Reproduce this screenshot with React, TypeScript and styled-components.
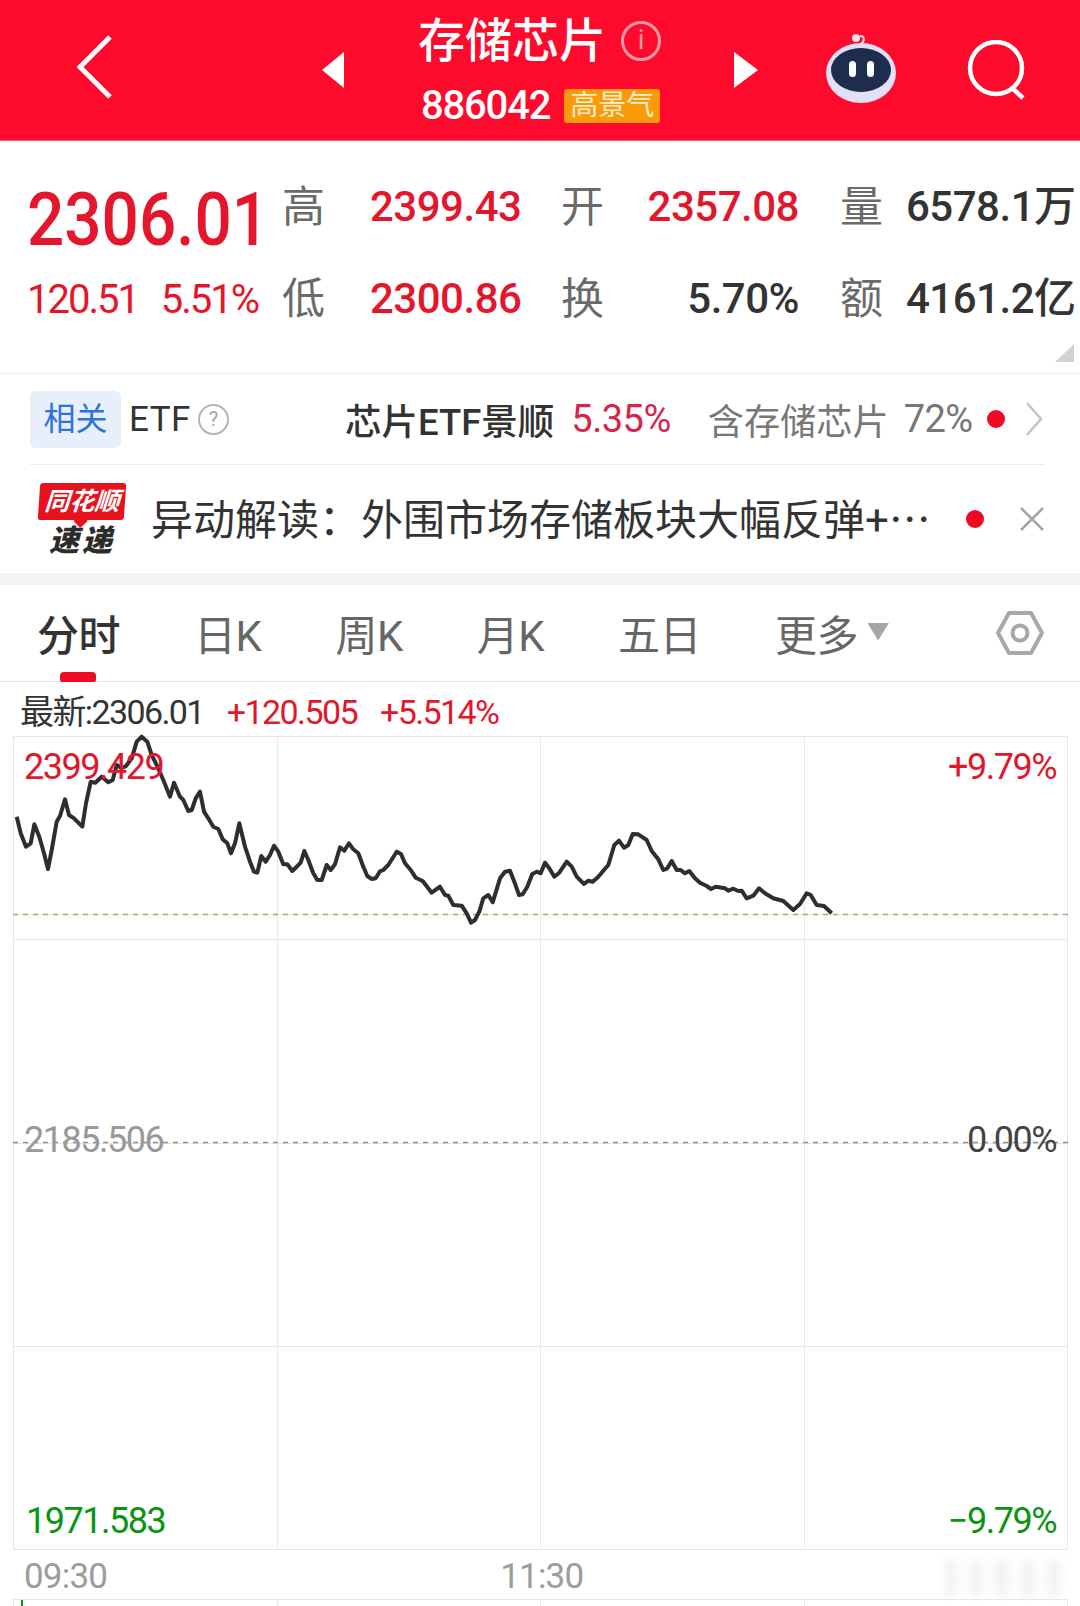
import styled, { createGlobalStyle } from "styled-components";

const FONT = `Roboto, "Noto Sans CJK SC", sans-serif`;
const RED = "#e4162c";

const GlobalStyle = createGlobalStyle`
	html, body {
		margin: 0;
		padding: 0;
		background: #fff;
	}
	* {
		box-sizing: border-box;
	}
`;

// points read off the reference, in px relative to the chart's top-left corner
const LINE_A = [
	[50, 260], [62, 310], [78, 350], [92, 340], [103, 283], [118, 320], [132, 370], [144, 417], [155, 360], [170, 275],
	[180, 258], [195, 208], [207, 255], [222, 265], [247, 290], [258, 220], [272, 155], [286, 158], [305, 140], [325, 157],
	[338, 150], [350, 105], [365, 115], [378, 108], [395, 85], [410, 35], [425, 20], [442, 35], [455, 75], [470, 105],
	[490, 150], [510, 200], [522, 158], [540, 200], [550, 210], [565, 243], [575, 240], [587, 205], [600, 185], [612, 245],
	[625, 265], [640, 290], [655, 297], [668, 328], [682, 340], [693, 370], [705, 340], [718, 280], [735, 350], [750, 395],
	[762, 425], [772, 428], [784, 378], [797, 395], [810, 375], [822, 347], [835, 365], [850, 403], [862, 403], [877, 423],
	[890, 410], [902, 398], [913, 363], [925, 390], [940, 430], [952, 450], [965, 450], [980, 405], [992, 420], [1005, 403],
	[1020, 352], [1033, 362], [1047, 340], [1060, 358], [1075, 370], [1090, 410], [1102, 438], [1115, 447], [1127, 445],
	[1140, 424], [1150, 420], [1165, 405], [1190, 365], [1203, 372], [1215, 400], [1232, 420], [1247, 443], [1268, 453],
];
const LINE_B = [
	[35, 278], [60, 260], [75, 285], [85, 287], [100, 315], [125, 317], [140, 340], [153, 368], [165, 360], [178, 335],
	[190, 295], [205, 285], [218, 307], [240, 235], [255, 215], [270, 212], [283, 245], [297, 285], [308, 283], [322, 260],
	[337, 222], [350, 215], [362, 220], [375, 188], [388, 205], [403, 230], [418, 218], [440, 185], [455, 200], [470, 230],
	[492, 252], [505, 242], [518, 245], [535, 230], [550, 212], [565, 195], [583, 135], [597, 122], [612, 143], [625, 135],
	[638, 102], [655, 103], [680, 120], [695, 153], [715, 178], [730, 210], [742, 205], [755, 183], [770, 210], [782, 210],
	[795, 220], [808, 213], [825, 235], [840, 248], [860, 258], [873, 267], [887, 260], [915, 265], [925, 272], [940, 266],
	[955, 273], [965, 272], [980, 295], [1000, 287], [1017, 265], [1035, 280], [1060, 295], [1090, 303], [1120, 330],
	[1140, 312], [1160, 280], [1172, 285], [1190, 315], [1212, 318], [1235, 340],
];
const PRICE_LINE = [
	...LINE_A.map(([x, y]) => [x / 3 - 13, y / 3 - 6]),
	...LINE_B.map(([x, y]) => [420 + x / 3 - 13, 64 + y / 3]),
]
	.map(([x, y]) => `${x.toFixed(1)},${y.toFixed(1)}`)
	.join(" ");

const App = () => {
	return (
		<Page>
			<GlobalStyle />
			<Header>
				<BackIcon width="36" height="64" viewBox="0 0 36 64">
					<path d="M33 2 L3 32 L33 62" fill="none" stroke="#fff" strokeWidth="5" />
				</BackIcon>
				<svg width="22" height="36" viewBox="0 0 22 36">
					<path d="M22 0 L0 18 L22 36 Z" fill="#fff" />
				</svg>
				<TitleBlock>
					<TitleRow>
						<Title>存储芯片</Title>
						<InfoMark>i</InfoMark>
					</TitleRow>
					<CodeRow>
						<Code>886042</Code>
						<Badge>高景气</Badge>
					</CodeRow>
				</TitleBlock>
				<svg width="24" height="36" viewBox="0 0 24 36">
					<path d="M0 0 L24 18 L0 36 Z" fill="#fff" />
				</svg>
				<RobotIcon width="76" height="70" viewBox="0 0 76 70">
					<path d="M38 11 C42 8 42 3 37 3" fill="none" stroke="#f7dfe8" strokeWidth="2" />
					<circle cx="33" cy="5" r="4" fill="#f7dfe8" />
					<ellipse cx="38" cy="40" rx="35" ry="30" fill="#e4dff8" />
					<ellipse cx="38" cy="37" rx="30" ry="22" fill="#1e2c4e" />
					<rect x="26" y="28" width="7" height="16" rx="3.5" fill="#fff" />
					<rect x="44" y="28" width="7" height="16" rx="3.5" fill="#fff" />
				</RobotIcon>
				<svg width="62" height="60" viewBox="0 0 62 60">
					<circle cx="30" cy="28" r="26" fill="none" stroke="#fff" strokeWidth="4.5" />
					<path d="M45 47 L57 58" stroke="#fff" strokeWidth="4.5" />
				</svg>
			</Header>

			<Quote>
				<BigBlock>
					<BigPrice>2306.01</BigPrice>
				</BigBlock>
				<Label>高</Label>
				<Value $color={RED}>2399.43</Value>
				<Label>开</Label>
				<Value $color={RED} $right>2357.08</Value>
				<Label>量</Label>
				<Value $color="#333">6578.1万</Value>
				<ChangeRow>
					<Change>120.51</Change>
					<Change>5.51%</Change>
				</ChangeRow>
				<Label>低</Label>
				<Value $color={RED}>2300.86</Value>
				<Label>换</Label>
				<Value $color="#333" $right>5.70%</Value>
				<Label>额</Label>
				<Value $color="#333">4161.2亿</Value>
				<CornerMark />
			</Quote>

			<EtfRow>
				<Chip>相关</Chip>
				<EtfLabel>ETF</EtfLabel>
				<HelpMark>?</HelpMark>
				<EtfName>芯片ETF景顺</EtfName>
				<EtfChange>5.35%</EtfChange>
				<EtfHolding>含存储芯片</EtfHolding>
				<EtfShare>72%</EtfShare>
				<Dot />
				<svg width="18" height="34" viewBox="0 0 18 34">
					<path d="M2 1 L16 17 L2 33" fill="none" stroke="#c4c4c4" strokeWidth="2.5" />
				</svg>
			</EtfRow>

			<NewsRow>
				<Logo>
					<LogoBubble>同花顺</LogoBubble>
					<LogoText>速递</LogoText>
				</Logo>
				<NewsText>异动解读：外围市场存储板块大幅反弹+⋯</NewsText>
				<NewsDot />
				<svg width="26" height="24" viewBox="0 0 26 24">
					<path d="M2 1 L24 23 M24 1 L2 23" stroke="#a5a5a5" strokeWidth="2.5" />
				</svg>
			</NewsRow>

			<Band />

			<Tabs>
				<Tab $active>
					分时
					<TabMarker />
				</Tab>
				<Tab>日K</Tab>
				<Tab>周K</Tab>
				<Tab>月K</Tab>
				<Tab>五日</Tab>
				<Tab>
					更多
					<TabCaret />
				</Tab>
				<SettingsIcon>
					<svg width="50" height="46" viewBox="0 0 50 46">
						<path
							d="M14 3 L36 3 L47 23 L36 43 L14 43 L3 23 Z"
							fill="none"
							stroke="#a8a8a8"
							strokeWidth="4"
							strokeLinejoin="round"
						/>
						<circle cx="25" cy="23" r="7.5" fill="none" stroke="#a8a8a8" strokeWidth="4" />
					</svg>
				</SettingsIcon>
			</Tabs>

			<Summary>
				<SummaryItem $color="#333">最新:2306.01</SummaryItem>
				<SummaryItem $color={RED}>+120.505</SummaryItem>
				<SummaryItem $color={RED}>+5.514%</SummaryItem>
			</Summary>

			<Chart>
				<GridLines>
					{Array.from({ length: 16 }, (_, i) => (
						<GridCell key={i} />
					))}
				</GridLines>
				<PriceSvg viewBox="0 0 1055 814">
					<path d="M0 178.5 H1055" stroke="#f4eecb" strokeWidth="1.5" />
					<path d="M0 178.5 H1055" stroke="#a9a596" strokeWidth="1.5" strokeDasharray="5 5" />
					<path d="M0 406.5 H1055" stroke="#8f8f8f" strokeWidth="1.5" strokeDasharray="5 5" />
					<polyline points={PRICE_LINE} fill="none" stroke="#2e2e2e" strokeWidth="4" strokeLinejoin="round" />
				</PriceSvg>
				<ChartLabel $top={11} $left={11} $color={RED}>2399.429</ChartLabel>
				<ChartLabel $top={11} $right={12} $color={RED}>+9.79%</ChartLabel>
				<ChartLabel $top={384} $left={11} $color="#999">2185.506</ChartLabel>
				<ChartLabel $top={384} $right={12} $color="#444">0.00%</ChartLabel>
				<ChartLabel $top={765} $left={13} $color="#0b9414">1971.583</ChartLabel>
				<ChartLabel $top={765} $right={12} $color="#0b9414">−9.79%</ChartLabel>
			</Chart>

			<TimeRow>
				<TimeLabel>09:30</TimeLabel>
				<TimeLabel $mid>11:30</TimeLabel>
				<Watermark />
			</TimeRow>

			<LowerChart>
				<VolumeTick />
				<LowerCell />
				<LowerCell />
				<LowerCell />
				<LowerCell />
			</LowerChart>
		</Page>
	);
};

const Page = styled.div`
	width: 1080px;
	height: 1606px;
	overflow: hidden;
	background: #fff;
	font-family: ${FONT};
`;

const Header = styled.header`
	height: 141px;
	padding-left: 77px;
	background: #fd0a2c;
	border-bottom: 1px solid #f2606f;
	display: grid;
	grid-template-columns: 245px 96px 316px 91px 141px 62px;
	align-items: center;
`;

const BackIcon = styled.svg`
	margin-top: -6px;
`;

const RobotIcon = styled.svg`
	margin: -4px 0 0 -2px;
`;

const TitleBlock = styled.div`
	display: flex;
	flex-direction: column;
	gap: 16px;
	color: #fff;
`;

const TitleRow = styled.div`
	display: flex;
	align-items: center;
	gap: 15px;
	height: 64px;
	margin-top: -9px;
`;

const Title = styled.div`
	font-size: 47px;
	font-weight: 500;
	line-height: 1;
	white-space: nowrap;
`;

const InfoMark = styled.div`
	width: 40px;
	height: 40px;
	border: 3px solid #ff9aa6;
	border-radius: 50%;
	color: #ff9aa6;
	font-size: 27px;
	line-height: 33px;
	text-align: center;
`;

const CodeRow = styled.div`
	margin-left: 3px;
	display: flex;
	align-items: center;
	gap: 14px;
`;

const Code = styled.div`
	font-size: 40px;
	font-weight: 500;
	line-height: 34px;
	letter-spacing: -1.2px;
`;

const Badge = styled.div`
	width: 96px;
	height: 34px;
	border-radius: 3px;
	background: #fa9a0a;
	color: #ffeec8;
	font-size: 28px;
	line-height: 34px;
	text-align: center;
	white-space: nowrap;
`;

const Quote = styled.section`
	position: relative;
	height: 233px;
	padding: 20px 0 0 27px;
	border-bottom: 1px solid #ececec;
	display: grid;
	grid-template-columns: 255px 88px 191px 50px 229px 66px auto;
	grid-template-rows: 92px 92px;
	align-items: center;
	white-space: nowrap;
`;

const BigBlock = styled.div`
	margin-top: 24px;
`;

const BigPrice = styled.div`
	display: inline-block;
	color: ${RED};
	font-size: 75px;
	font-weight: 500;
	line-height: 74px;
	transform: scaleX(0.875);
	transform-origin: left center;
`;

const ChangeRow = styled.div`
	width: 231px;
	margin-top: 2px;
	display: flex;
	justify-content: space-between;
`;

const Change = styled.span`
	color: ${RED};
	font-size: 40px;
	letter-spacing: -2px;
	line-height: 48px;
`;

const Label = styled.div`
	color: #6a6a6a;
	font-size: 43px;
	line-height: 48px;
`;

const Value = styled.div<{ $color: string; $right?: boolean }>`
	padding-right: ${(p) => (p.$right ? "41px" : 0)};
	color: ${(p) => p.$color};
	font-size: 42px;
	font-weight: 500;
	letter-spacing: -0.5px;
	line-height: 48px;
	text-align: ${(p) => (p.$right ? "right" : "left")};
`;

const CornerMark = styled.div`
	position: absolute;
	right: 6px;
	bottom: 11px;
	width: 19px;
	height: 18px;
	background: #d2d2d2;
	clip-path: polygon(100% 0, 100% 100%, 0 100%);
`;

const EtfRow = styled.div`
	height: 91px;
	margin: 0 35px 0 30px;
	border-bottom: 1px solid #ececec;
	display: flex;
	align-items: center;
	white-space: nowrap;
`;

const Chip = styled.div`
	width: 91px;
	height: 57px;
	border-radius: 6px;
	background: #e6effa;
	color: #2d73d8;
	font-size: 32px;
	line-height: 57px;
	text-align: center;
`;

const EtfLabel = styled.div`
	margin-left: 8px;
	color: #333;
	font-size: 35px;
	letter-spacing: 0.5px;
`;

const HelpMark = styled.div`
	width: 31px;
	height: 31px;
	margin: 0 0 0 7px;
	border: 2px solid #b5b5b5;
	border-radius: 50%;
	color: #a5a5a5;
	font-size: 20px;
	line-height: 27px;
	text-align: center;
`;

const EtfName = styled.div`
	margin-left: 116px;
	color: #333;
	font-size: 36.5px;
	font-weight: 500;
`;

const EtfChange = styled.div`
	margin-left: 17px;
	color: #d7254a;
	font-size: 38px;
	letter-spacing: -0.5px;
`;

const EtfHolding = styled.div`
	margin-left: 37px;
	color: #777;
	font-size: 36.2px;
`;

const EtfShare = styled.div`
	margin-left: 15px;
	color: #777;
	font-size: 38px;
	letter-spacing: -0.5px;
`;

const Dot = styled.div`
	flex: none;
	width: 18px;
	height: 18px;
	margin: 0 20px 0 14px;
	border-radius: 50%;
	background: #ee0a24;
`;

const NewsDot = styled(Dot)`
	margin: 0 35px 0 13px;
`;

const NewsRow = styled.div`
	height: 108px;
	padding-left: 38px;
	display: flex;
	align-items: center;
`;

const Logo = styled.div`
	width: 88px;
	flex: none;
	display: flex;
	flex-direction: column;
	align-items: center;
	font-style: italic;
	font-weight: 700;
`;

const LogoBubble = styled.div`
	position: relative;
	width: 86px;
	height: 37px;
	border-radius: 3px;
	background: #e8121f;
	color: #fff;
	font-size: 25px;
	line-height: 37px;
	text-align: center;
	white-space: nowrap;
	transform: skewX(-4deg);

	&::after {
		content: "";
		position: absolute;
		left: 38px;
		bottom: -6px;
		width: 10px;
		height: 10px;
		background: #e8121f;
		transform: rotate(45deg);
	}
`;

const LogoText = styled.div`
	margin-top: 6px;
	color: #2c2c2c;
	font-size: 30px;
	font-weight: 900;
	line-height: 30px;
	letter-spacing: 3px;
`;

const NewsText = styled.div`
	width: 802px;
	margin: 4px 0 0 25px;
	color: #333;
	font-size: 42px;
	line-height: 52px;
	white-space: nowrap;
`;

const Band = styled.div`
	height: 12px;
	background: #f4f4f4;
`;

const Tabs = styled.nav`
	height: 97px;
	padding: 0 35px 0 37px;
	border-bottom: 1px solid #e4e4e4;
	display: flex;
	align-items: center;
	gap: 74px;
`;

const Tab = styled.div<{ $active?: boolean }>`
	position: relative;
	height: 97px;
	color: ${(p) => (p.$active ? "#333" : "#666")};
	font-size: 42px;
	font-weight: ${(p) => (p.$active ? 500 : 400)};
	line-height: 104px;
	letter-spacing: -0.5px;
	white-space: nowrap;
`;

const TabMarker = styled.span`
	position: absolute;
	left: 23px;
	bottom: 0;
	width: 36px;
	height: 10px;
	border-radius: 4px 4px 2px 2px;
	background: #ee0a24;
`;

const TabCaret = styled.span`
	position: absolute;
	left: 92px;
	top: 38px;
	width: 22px;
	height: 18px;
	background: #a5a5a5;
	clip-path: polygon(0 0, 100% 0, 50% 100%);
`;

const SettingsIcon = styled.div`
	margin-left: auto;
	line-height: 0;
`;

const Summary = styled.div`
	height: 54px;
	padding: 6px 0 0 20px;
	display: flex;
	align-items: center;
	gap: 23px;
`;

const SummaryItem = styled.div<{ $color: string }>`
	color: ${(p) => p.$color};
	font-size: 34px;
	letter-spacing: -1.6px;
	line-height: 36px;
	white-space: nowrap;
`;

const Chart = styled.div`
	position: relative;
	width: 1055px;
	height: 814px;
	margin-left: 13px;
`;

const GridLines = styled.div`
	height: 100%;
	border-top: 1px solid #e6e6e6;
	border-left: 1px solid #e6e6e6;
	display: grid;
	grid-template-columns: repeat(4, 1fr);
	grid-template-rows: repeat(4, 1fr);
`;

const GridCell = styled.div`
	border-right: 1px solid #e9e9e9;
	border-bottom: 1px solid #e6e6e6;
`;

const PriceSvg = styled.svg`
	position: absolute;
	inset: 0;
	width: 100%;
	height: 100%;
	overflow: visible;
`;

const ChartLabel = styled.div<{ $top: number; $left?: number; $right?: number; $color: string }>`
	position: absolute;
	top: ${(p) => p.$top}px;
	${(p) => (p.$left !== undefined ? `left: ${p.$left}px;` : "")}
	${(p) => (p.$right !== undefined ? `right: ${p.$right}px;` : "")}
	color: ${(p) => p.$color};
	font-size: 36px;
	letter-spacing: -1.5px;
	line-height: 40px;
`;

const TimeRow = styled.div`
	position: relative;
	height: 49px;
	padding: 4px 0 0 24px;
	display: flex;
	align-items: center;
`;

const TimeLabel = styled.div<{ $mid?: boolean }>`
	margin-left: ${(p) => (p.$mid ? "393px" : 0)};
	color: #9c9c9c;
	font-size: 35px;
	letter-spacing: -0.8px;
	line-height: 40px;
`;

const Watermark = styled.div`
	position: absolute;
	left: 945px;
	top: 10px;
	width: 120px;
	height: 36px;
	background: repeating-linear-gradient(90deg, #e4e4e4 0 10px, #fafafa 10px 26px);
	filter: blur(4px);
	opacity: 0.5;
`;

const LowerChart = styled.div`
	position: relative;
	width: 1055px;
	height: 7px;
	margin-left: 13px;
	border-top: 1px solid #e6e6e6;
	border-left: 1px solid #e6e6e6;
	display: grid;
	grid-template-columns: repeat(4, 1fr);
`;

const LowerCell = styled.div`
	border-right: 1px solid #e9e9e9;
`;

const VolumeTick = styled.div`
	position: absolute;
	left: 7px;
	top: 0;
	width: 2px;
	height: 7px;
	background: #0b9414;
`;

export default App;
